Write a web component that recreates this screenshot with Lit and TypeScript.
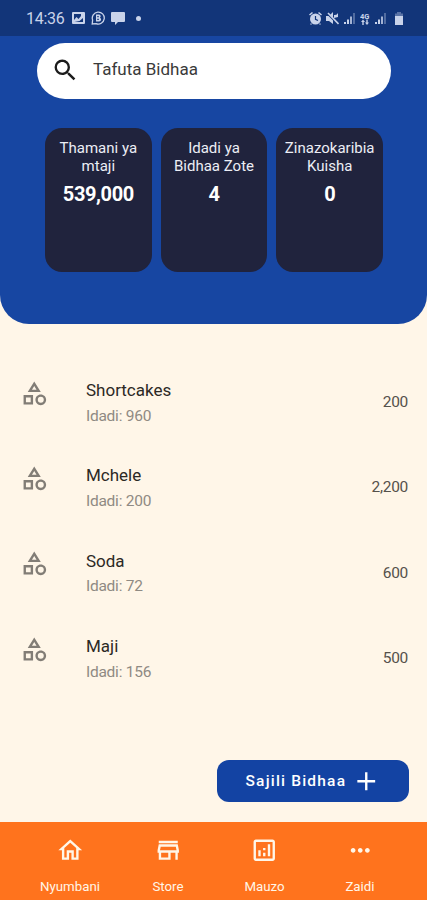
import { LitElement, html, css, svg } from "lit";
import { customElement } from "lit/decorators.js";

const icons = {
  search: "M15.5 14h-.79l-.28-.27A6.471 6.471 0 0 0 16 9.5 6.5 6.5 0 1 0 9.5 16c1.61 0 3.09-.59 4.23-1.57l.27.28v.79l5 4.99L20.49 19l-4.99-5zm-6 0C7.01 14 5 11.99 5 9.5S7.01 5 9.5 5 14 7.01 14 9.5 11.99 14 9.5 14z",
  category: "M12 2l-5.5 9h11L12 2zm0 3.84L13.93 9h-3.87L12 5.84zM17.5 13c-2.49 0-4.5 2.01-4.5 4.5s2.01 4.5 4.5 4.5 4.5-2.01 4.5-4.5-2.01-4.5-4.5-4.5zm0 7a2.5 2.5 0 0 1 0-5 2.5 2.5 0 0 1 0 5zM3 21.5h8v-8H3v8zm2-6h4v4H5v-4z",
  home: "M12 5.69l5 4.5V18h-2v-6H9v6H7v-7.81l5-4.5M12 3L2 12h3v8h6v-6h2v6h6v-8h3L12 3z",
  store: "M18.36 9l.6 3H5.04l.6-3h12.72M20 4H4v2h16V4zm0 3H4l-1 5v2h1v6h10v-6h4v6h2v-6h1v-2l-1-5zM6 18v-4h6v4H6z",
  analytics: "M19 3H5c-1.1 0-2 .9-2 2v14c0 1.1.9 2 2 2h14c1.1 0 2-.9 2-2V5c0-1.1-.9-2-2-2zm0 16H5V5h14v14zM7 12h2v5H7v-5zm8-5h2v10h-2V7zm-4 7h2v3h-2v-3zm0-4h2v2h-2v-2z",
  more: "M6 10c-1.1 0-2 .9-2 2s.9 2 2 2 2-.9 2-2-.9-2-2-2zm12 0c-1.1 0-2 .9-2 2s.9 2 2 2 2-.9 2-2-.9-2-2-2zm-6 0c-1.1 0-2 .9-2 2s.9 2 2 2 2-.9 2-2-.9-2-2-2z",
  add: "M19.5 13h-6.5v6.5h-2v-6.5H4.5v-2h6.5V4.5h2v6.5h6.5v2z",
};

const icon = (d: string) => html`<svg class="icon" viewBox="0 0 24 24"><path d=${d} /></svg>`;

const bars = (faded: number) => svg`
  <rect x="0" y="10" width="2" height="2" />
  <rect x="3" y="7.5" width="2" height="4.5" />
  <rect x="6" y="4.5" width="2" height="7.5" opacity=${faded} />
  <rect x="9" y="1" width="2" height="11" opacity=".35" />`;

const stats = [
  { label: ["Thamani ya", "mtaji"], value: "539,000" },
  { label: ["Idadi ya", "Bidhaa Zote"], value: "4" },
  { label: ["Zinazokaribia", "Kuisha"], value: "0" },
];

const products = [
  { name: "Shortcakes", count: 960, price: "200" },
  { name: "Mchele", count: 200, price: "2,200" },
  { name: "Soda", count: 72, price: "600" },
  { name: "Maji", count: 156, price: "500" },
];

const tabs = [
  { label: "Nyumbani", d: icons.home },
  { label: "Store", d: icons.store },
  { label: "Mauzo", d: icons.analytics },
  { label: "Zaidi", d: icons.more },
];

@customElement("app-root")
export class AppRoot extends LitElement {
  static styles = css`
    :host {
      display: flex;
      flex-direction: column;
      height: 900px;
      overflow: hidden;
      background: #fff6e8;
      font-family: Roboto, "Liberation Sans", sans-serif;
      color: #2c2925;
    }
    * { box-sizing: border-box; }
    svg { display: block; fill: currentColor; flex: none; }
    .icon { width: 28.5px; height: 28.5px; }
    .header {
      height: 324px;
      flex: none;
      background: #1746a2;
      border-radius: 0 0 29px 29px;
      overflow: hidden;
    }
    .status {
      height: 36px;
      padding: 0 20px 0 26px;
      display: flex;
      align-items: center;
      background: #123579;
      color: #c9d3ea;
    }
    .time { font-size: 16px; width: 46px; letter-spacing: -0.3px; margin-top: 1px; }
    .left, .right { display: flex; align-items: center; }
    .left { gap: 6px; }
    .right { gap: 4.9px; margin-left: auto; }
    .dot { width: 5px; height: 5px; border-radius: 50%; background: currentColor; margin-left: 5px; }
    .search {
      margin: 6.5px 36px 0 37px;
      height: 56px;
      border-radius: 28px;
      background: #fff;
      display: flex;
      align-items: center;
      padding-left: 13.5px;
      gap: 14px;
      color: #1c1c1c;
      font-size: 17px;
    }
    .query { color: #3a3a3a; margin-top: -3px; }
    .stats {
      display: flex;
      gap: 9px;
      margin: 29.5px 44px 0 45px;
    }
    .card {
      flex: 1 1 0;
      height: 144px;
      border-radius: 17px;
      background: #20233d;
      color: #fff;
      text-align: center;
      padding-top: 10.5px;
      white-space: nowrap;
    }
    .label { font-size: 15px; line-height: 18px; color: #eceef5; }
    .value { font-size: 20px; line-height: 22px; font-weight: 700; margin-top: 8px; letter-spacing: -0.4px; }
    .list { flex: 1; padding-top: 48px; }
    .row {
      height: 85.4px;
      display: flex;
      padding: 6.6px 19px 0 19.7px;
    }
    .row .icon { color: #827d76; }
    .body { margin-left: 37.8px; margin-top: 0.4px; flex: 1; }
    .name { font-size: 17px; line-height: 23px; }
    .count { font-size: 15.5px; line-height: 20px; margin-top: 3.6px; color: #8f8a83; letter-spacing: -0.25px; }
    .price { font-size: 15.5px; line-height: 20px; margin-top: 13.2px; color: #55514b; letter-spacing: -0.3px; }
    .action {
      align-self: flex-end;
      display: flex;
      align-items: center;
      gap: 5.5px;
      flex: none;
      width: 192px;
      height: 42px;
      margin: 0 18.5px 20px 0;
      padding-left: 29px;
      border: 0;
      border-radius: 12px;
      background: #1343a3;
      color: #fff;
      font: 500 15.5px Roboto, sans-serif;
      letter-spacing: 1.2px;
      white-space: nowrap;
    }
    .nav {
      height: 78px;
      flex: none;
      background: #ff731d;
      color: #fff6e8;
      display: grid;
      grid-template-columns: 98px 98px 95px 96px;
      padding-left: 21px;
    }
    .tab {
      display: flex;
      flex-direction: column;
      align-items: center;
      padding-top: 14px;
      font-size: 13.3px;
      line-height: 16px;
      gap: 14.5px;
    }
  `;

  render() {
    return html`
      <header class="header">
        <div class="status">
          <span class="time">14:36</span>
          <div class="left">
            <svg width="13" height="12" viewBox="0 0 13 12"><path fill-rule="evenodd" d="M1 0h11q1 0 1 1v10q0 1-1 1H1q-1 0-1-1V1q0-1 1-1zM2 2v6l2.5-3 2 2L9 4V2zM2.5 10H11V6L7.5 9z" /></svg>
            <svg width="14" height="14" viewBox="0 0 14 14"><path d="M1.2 13l.4-4A6 6 0 1 1 5 12.6z" fill="none" stroke="currentColor" stroke-width="1.3" /><path fill-rule="evenodd" d="M5 3.5h3a1.8 1.8 0 0 1 1 3.2 2 2 0 0 1-1 3.8H5zM6.3 5v1.3h1.4V5zm0 2.7v1.4h1.5V7.7z" /></svg>
            <svg width="14" height="13" viewBox="0 0 14 13"><path d="M1 0h12q1 0 1 1v8q0 1-1 1H7l-3 3v-3H1q-1 0-1-1V1q0-1 1-1z" /></svg>
            <span class="dot"></span>
          </div>
          <div class="right">
            <svg width="13" height="13" viewBox="0 0 13 13"><path d="M0 2.5L3 0l1 1-3 2.5zM13 2.5L10 0 9 1l3 2.5zM2 11l-1 1.5h2zM11 11l1 1.5h-2z" /><circle cx="6.5" cy="7" r="5.5" /><path d="M6.5 4v3.3L9 8.5" fill="none" stroke="#123579" stroke-width="1.2" /></svg>
            <svg width="13" height="13" viewBox="0 0 13 13"><path d="M0 4h3l4-4v12L3 9H0zM8 3q3 .5 4-2v4L8 6z" /><path d="M1 1l11 11" stroke="#123579" stroke-width="2" /><path d="M2 1l10.5 11" stroke="currentColor" stroke-width="1.6" /></svg>
            <svg width="11" height="12" viewBox="0 0 11 12">${bars(0.8)}</svg>
            <svg width="10" height="13" viewBox="0 0 10 13"><text x="0" y="6.5" font-size="7.5" font-weight="700">4G</text><path d="M3 7.5l2 2.5H3.7v3H2.3v-3H1zM7 13l-2-2.5h1.3v-3h1.4v3H9z" /></svg>
            <svg width="11" height="12" viewBox="0 0 11 12">${bars(0.8)}</svg>
            <svg width="16" height="13" viewBox="0 0 16 13"><path d="M6 0h4v1.5h2v3H4v-3h2z" opacity=".4" /><path d="M4 4h8v9H4z" /></svg>
          </div>
        </div>
        <div class="search">${icon(icons.search)}<span class="query">Tafuta Bidhaa</span></div>
        <section class="stats">
          ${stats.map((s) => html`
            <div class="card">
              <div class="label">${s.label[0]}<br />${s.label[1]}</div>
              <div class="value">${s.value}</div>
            </div>`)}
        </section>
      </header>
      <main class="list">
        ${products.map((p) => html`
          <div class="row">
            ${icon(icons.category)}
            <div class="body">
              <div class="name">${p.name}</div>
              <div class="count">Idadi: ${p.count}</div>
            </div>
            <div class="price">${p.price}</div>
          </div>`)}
      </main>
      <button class="action"><span>Sajili Bidhaa</span>${icon(icons.add)}</button>
      <nav class="nav">
        ${tabs.map((t) => html`<div class="tab">${icon(t.d)}<span>${t.label}</span></div>`)}
      </nav>
    `;
  }
}
